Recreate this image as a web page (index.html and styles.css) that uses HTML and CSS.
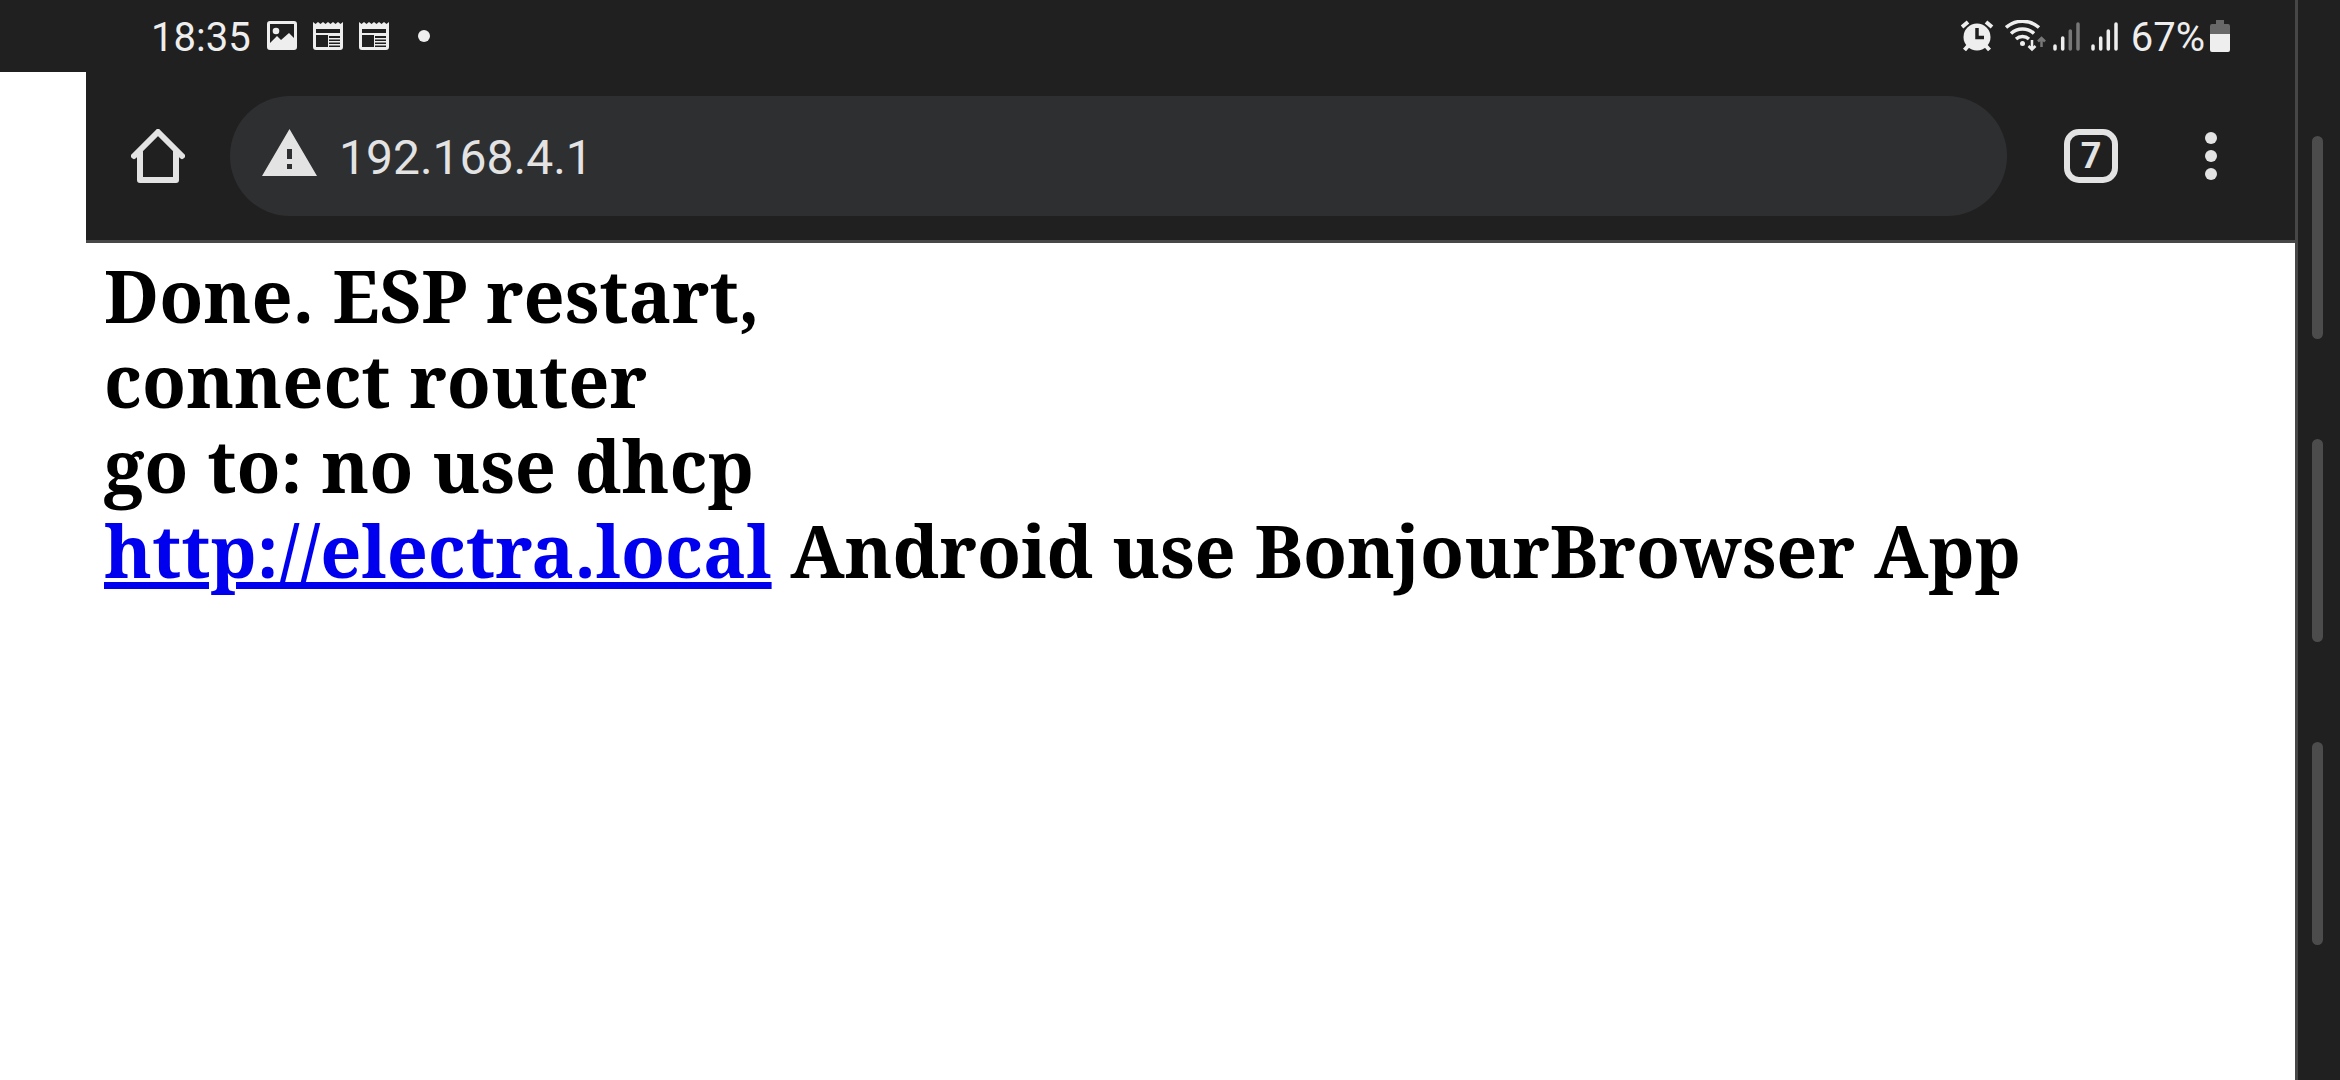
FILE: index.html
```html
<!DOCTYPE html>
<html lang="en">
<head>
<meta charset="utf-8">
<meta name="viewport" content="width=device-width, initial-scale=1">
<title>192.168.4.1</title>
<link rel="stylesheet" href="styles.css">
</head>
<body>
<div class="device">
  <div class="screen">
    <header class="status">
      <div class="status-group">
        <time class="clock">18:35</time>
        <div class="notices">
          <svg width="30" height="30" viewBox="0 0 30 30" aria-hidden="true">
            <path fill="#eee" fill-rule="evenodd" d="M3 0h24a3 3 0 0 1 3 3v23a3 3 0 0 1-3 3H3a3 3 0 0 1-3-3V3a3 3 0 0 1 3-3zM3 3v19l7-7 4 4 8-7 5 5V3z"/>
            <circle cx="9" cy="10" r="3.3" fill="#eee"/>
          </svg>
          <svg width="30" height="30" viewBox="0 0 30 30" aria-hidden="true">
            <path fill="#eee" fill-rule="evenodd" d="M0 1l2.500 2L5 1l2.500 2L10 1l2.500 2L15 1l2.500 2L20 1l2.500 2L25 1l2.500 2L30 1v25a3 3 0 0 1-3 3H3a3 3 0 0 1-3-3zM3 8v4h24V8zM3 14v12h12V14zM16 15v2h11v-2zM16 18.500v1.500h11v-1.500zM16 21.500V23h11v-1.500zM16 24.500V26h11v-1.500z"/>
          </svg>
          <svg width="30" height="30" viewBox="0 0 30 30" aria-hidden="true">
            <path fill="#eee" fill-rule="evenodd" d="M0 1l2.500 2L5 1l2.500 2L10 1l2.500 2L15 1l2.500 2L20 1l2.500 2L25 1l2.500 2L30 1v25a3 3 0 0 1-3 3H3a3 3 0 0 1-3-3zM3 8v4h24V8zM3 14v12h12V14zM16 15v2h11v-2zM16 18.500v1.500h11v-1.500zM16 21.500V23h11v-1.500zM16 24.500V26h11v-1.500z"/>
          </svg>
        </div>
        <span class="more-dot"></span>
      </div>
      <div class="status-group">
        <div class="signals">
          <svg width="34" height="32" viewBox="0 0 34 32" aria-hidden="true">
            <g stroke="#eee" stroke-width="4"><path d="M1 7l6-5M31 7l-6-5M7 26l-3.500 4M25 26l3.500 4"/></g>
            <circle cx="16" cy="17" r="13.500" fill="#eee"/>
            <path d="M16 8v9.500h7" fill="none" stroke="#202020" stroke-width="3.500"/>
          </svg>
          <svg class="wifi" width="42" height="32" viewBox="0 0 42 32" aria-hidden="true">
            <g fill="none" stroke="#eee" stroke-width="3.500"><path d="M1 7.500a25 25 0 0 1 33 0M6 13.500a17 17 0 0 1 23 0M11 19a10 10 0 0 1 13 0"/></g>
            <circle cx="17.500" cy="23.500" r="2.500" fill="#eee"/>
            <path d="M27 20v9M23.500 26l3.500 3.500 3.500-3.500" fill="none" stroke="#eee" stroke-width="2.500"/>
            <path d="M36.500 27v-9M33 21.500l3.500-3.500 3.500 3.500" fill="none" stroke="#777" stroke-width="2.500"/>
          </svg>
          <svg width="28" height="32" viewBox="0 0 28 32" aria-hidden="true">
            <g stroke-width="3.500" stroke-linecap="round"><path stroke="#eee" d="M2 26v3M9.700 18v11"/><path stroke="#777" d="M17.300 11v18M25 4v25"/></g>
          </svg>
          <svg width="28" height="32" viewBox="0 0 28 32" aria-hidden="true">
            <path stroke="#eee" stroke-width="3.500" stroke-linecap="round" d="M2 26v3M9.700 18v11M17.300 11v18M25 4v25"/>
          </svg>
        </div>
        <span class="charge">67%</span>
        <svg width="20" height="32" viewBox="0 0 20 32" aria-hidden="true">
          <path fill="#686868" d="M6 0h8v4h4a2 2 0 0 1 2 2v9H0V6a2 2 0 0 1 2-2h4z"/>
          <path fill="#eee" d="M0 14h20v16a2 2 0 0 1-2 2H2a2 2 0 0 1-2-2z"/>
        </svg>
      </div>
    </header>
    <div class="browser">
      <nav class="toolbar">
        <button class="tool home" aria-label="Home">
          <svg width="54" height="54" viewBox="0 0 54 54" aria-hidden="true">
            <g fill="none" stroke="#e3e3e3" stroke-width="6" stroke-linejoin="round" stroke-linecap="round"><path d="M3 27L27 3l24 24"/><path d="M9 23v28h36V23"/></g>
          </svg>
        </button>
        <div class="address">
          <svg width="55" height="54" viewBox="0 0 55 54" aria-hidden="true">
            <path fill="#e3e3e3" fill-rule="evenodd" d="M27.500 0L55 47H0zM25 20v10h5V20zM25 35v5h5v-5z"/>
          </svg>
          <input class="url" type="text" value="192.168.4.1" aria-label="Address">
        </div>
        <button class="tool tabs" aria-label="Open tabs"><span class="tab-count">7</span></button>
        <button class="tool menu" aria-label="Menu">
          <svg width="12" height="48" viewBox="0 0 12 48" aria-hidden="true">
            <g fill="#e3e3e3"><circle cx="6" cy="6" r="6"/><circle cx="6" cy="24" r="6"/><circle cx="6" cy="42" r="6"/></g>
          </svg>
        </button>
      </nav>
      <main class="page">
        <h1 class="message">Done. ESP restart,<br>connect router<br>go to: no use dhcp<br><a href="http://electra.local">http://electra.local</a> Android use BonjourBrowser App</h1>
      </main>
    </div>
  </div>
  <aside class="rail">
    <span class="handle"></span>
    <span class="handle"></span>
    <span class="handle"></span>
  </aside>
</div>
</body>
</html>
```
FILE: styles.css
```css
* {
  box-sizing: border-box;
}

body {
  margin: 0;
  background: #fff;
  font-family: Roboto, sans-serif;
}

svg {
  display: block;
  flex: none;
}

.device {
  display: flex;
  min-height: 100vh;
}

.screen {
  flex: 1;
  min-width: 0;
}

.status {
  display: flex;
  justify-content: space-between;
  height: 72px;
  padding: 0 65px 0 151px;
  background: #202020;
  color: #eee;
  font-size: 40px;
  line-height: 48px;
}

.status-group {
  display: flex;
  align-items: center;
  height: 72px;
}

.clock,
.charge {
  padding-top: 4px;
}

.clock {
  margin-right: 16px;
}

.notices {
  display: flex;
  gap: 16px;
}

.more-dot {
  width: 12px;
  height: 12px;
  margin-left: 29px;
  border-radius: 50%;
  background: #eee;
}

.signals {
  display: flex;
  gap: 10px;
}

.wifi {
  margin-right: -4px;
}

.charge {
  margin: 0 5px 0 12px;
}

.browser {
  margin-left: 86px;
}

.toolbar {
  display: flex;
  align-items: center;
  height: 171px;
  padding: 0 24px 0 12px;
  border-bottom: 3px solid #474747;
  background: #202020;
}

.tool {
  display: grid;
  place-items: center;
  width: 120px;
  height: 120px;
  padding: 0;
  border: 0;
  background: none;
  color: #e3e3e3;
}

.address {
  display: flex;
  flex: 1;
  align-items: center;
  gap: 22px;
  height: 120px;
  margin: 0 24px 0 12px;
  padding: 0 32px;
  border-radius: 60px;
  background: #2e2f31;
}

.url {
  flex: 1;
  min-width: 0;
  padding: 4px 0 0;
  border: 0;
  outline: 0;
  background: none;
  color: #e3e3e3;
  font: 48px/60px Roboto, sans-serif;
}

.tab-count {
  display: grid;
  place-items: center;
  width: 54px;
  height: 54px;
  border: 6px solid #e3e3e3;
  border-radius: 15px;
  font: bold 36px/42px Roboto, sans-serif;
}

.page {
  padding: 10px 18px;
}

.message {
  margin: 0;
  color: #000;
  font: bold 72px/85px "Noto Serif", "DejaVu Serif Condensed", "Liberation Serif", serif;
}

.message a {
  color: #00e;
}

.rail {
  display: flex;
  flex-direction: column;
  align-items: center;
  gap: 100px;
  width: 45px;
  padding-top: 136px;
  padding-right: 3px;
  border-left: 3px solid #474747;
  background: #202020;
}

.handle {
  width: 11px;
  height: 203px;
  border-radius: 6px;
  background: #4c4c4c;
}
```
